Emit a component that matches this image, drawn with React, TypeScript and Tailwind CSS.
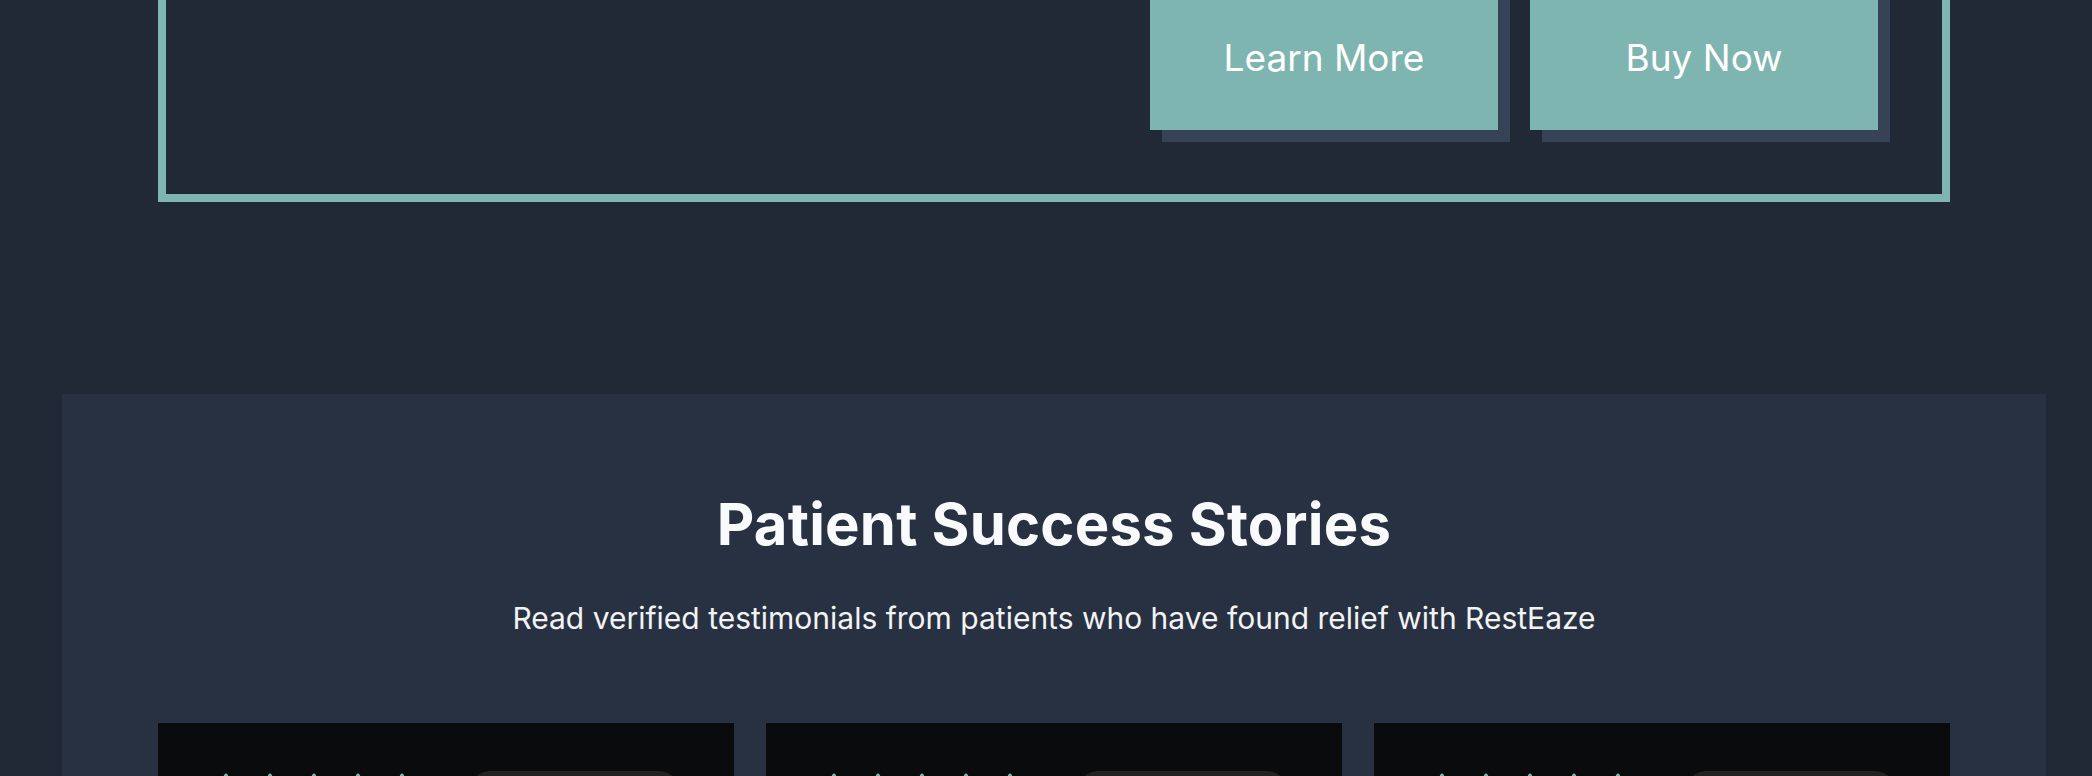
import { Star, BadgeCheck } from 'lucide-react'

const testimonials = [
  { name: 'Margaret L.', badge: 'Verified Patient' },
  { name: 'David R.', badge: 'Verified Patient' },
  { name: 'Susan K.', badge: 'Verified Patient' },
]

export default function App() {
  return (
    <div
      className="min-h-screen bg-[#212836] pl-[62px] pr-[46px] pb-24"
      style={{ fontFamily: 'Inter, "Noto Sans", sans-serif' }}
    >
      {/* CTA box */}
      <div className="mx-24 mt-[-86px] border-8 border-[#7fb5b0] p-16">
        <div className="flex justify-end gap-8">
          <button className="flex h-[144px] w-[348px] items-center justify-center bg-[#7fb5b0] text-[37px] text-white shadow-[12px_12px_0_#364256]">
            Learn More
          </button>
          <button className="flex h-[144px] w-[348px] items-center justify-center bg-[#7fb5b0] text-[37px] text-white shadow-[12px_12px_0_#364256]">
            Buy Now
          </button>
        </div>
      </div>

      {/* Testimonials */}
      <section className="mt-48 bg-[#283141] px-24 pt-24 pb-24">
        <h2 className="text-center text-[58px] leading-[1.2] font-bold tracking-[0.2px] text-[#f8fafc]">
          Patient Success Stories
        </h2>
        <p className="mt-9 text-center text-[30px] leading-[45px] text-[#f1f3f5]">
          Read verified testimonials from patients who have found relief with RestEaze
        </p>

        <div className="mt-[82px] grid grid-cols-3 gap-8">
          {testimonials.map((t, i) => (
            <div key={i} className="bg-[#0a0b0d] p-12">
              <div className="flex items-start gap-12">
                <div className="flex gap-1">
                  {[0, 1, 2, 3, 4].map((s) => (
                    <Star key={s} className="h-10 w-10 fill-[#7fb5b0] text-[#7fb5b0]" strokeWidth={1} />
                  ))}
                </div>
                <div className="flex h-10 w-[209px] items-center justify-center gap-2 rounded-full bg-[#222222] text-lg text-[#7fb5b0]">
                  <BadgeCheck className="h-5 w-5" />
                  {t.badge}
                </div>
              </div>
              <p className="mt-8 text-xl leading-relaxed text-gray-300">
                RestEaze has made a real difference to my nights. {t.name}
              </p>
            </div>
          ))}
        </div>
      </section>
    </div>
  )
}
